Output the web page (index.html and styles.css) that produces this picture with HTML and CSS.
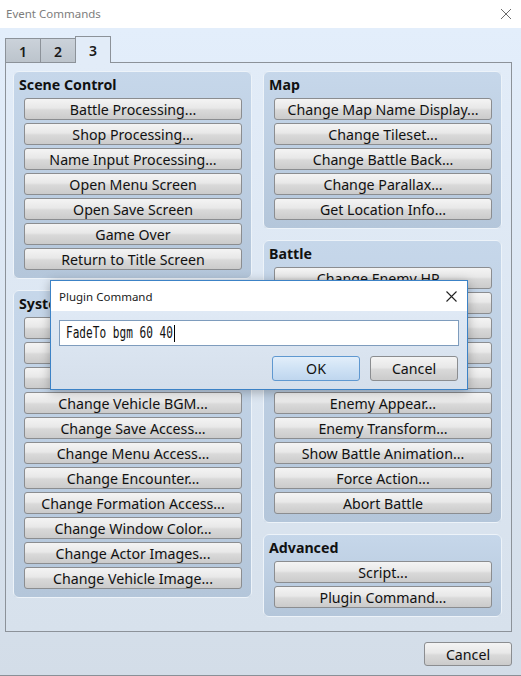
FILE: index.html
```html
<!DOCTYPE html>
<html lang="en">
<head>
<meta charset="utf-8">
<title>Event Commands</title>
<link rel="stylesheet" href="styles.css">
</head>
<body>
<div class="window">
  <header class="titlebar">
    <span class="titlebar-text">Event Commands</span>
    <svg class="close-icon" width="12" height="12" viewBox="0 0 12 12"><path d="M1 1 L11 11 M11 1 L1 11" stroke="#6b6b6b" stroke-width="1" fill="none"/></svg>
  </header>

  <main class="client">
    <div class="tabs">
      <div class="tab">1</div>
      <div class="tab">2</div>
      <div class="tab tab-active">3</div>
    </div>

    <section class="panel">
      <div class="column">
        <fieldset class="group">
          <h2 class="group-title">Scene Control</h2>
          <button class="btn">Battle Processing...</button>
          <button class="btn">Shop Processing...</button>
          <button class="btn">Name Input Processing...</button>
          <button class="btn">Open Menu Screen</button>
          <button class="btn">Open Save Screen</button>
          <button class="btn">Game Over</button>
          <button class="btn">Return to Title Screen</button>
        </fieldset>
        <fieldset class="group">
          <h2 class="group-title">System Settings</h2>
          <button class="btn">Change Battle BGM...</button>
          <button class="btn">Change Victory ME...</button>
          <button class="btn">Change Defeat ME...</button>
          <button class="btn">Change Vehicle BGM...</button>
          <button class="btn">Change Save Access...</button>
          <button class="btn">Change Menu Access...</button>
          <button class="btn">Change Encounter...</button>
          <button class="btn">Change Formation Access...</button>
          <button class="btn">Change Window Color...</button>
          <button class="btn">Change Actor Images...</button>
          <button class="btn">Change Vehicle Image...</button>
        </fieldset>
      </div>
      <div class="column">
        <fieldset class="group">
          <h2 class="group-title">Map</h2>
          <button class="btn">Change Map Name Display...</button>
          <button class="btn">Change Tileset...</button>
          <button class="btn">Change Battle Back...</button>
          <button class="btn">Change Parallax...</button>
          <button class="btn">Get Location Info...</button>
        </fieldset>
        <fieldset class="group">
          <h2 class="group-title">Battle</h2>
          <button class="btn">Change Enemy HP...</button>
          <button class="btn">Change Enemy MP...</button>
          <button class="btn">Change Enemy TP...</button>
          <button class="btn">Change Enemy State...</button>
          <button class="btn">Enemy Recover All...</button>
          <button class="btn">Enemy Appear...</button>
          <button class="btn">Enemy Transform...</button>
          <button class="btn">Show Battle Animation...</button>
          <button class="btn">Force Action...</button>
          <button class="btn">Abort Battle</button>
        </fieldset>
        <fieldset class="group">
          <h2 class="group-title">Advanced</h2>
          <button class="btn">Script...</button>
          <button class="btn">Plugin Command...</button>
        </fieldset>
      </div>
    </section>

    <footer class="footer">
      <button class="btn btn-footer">Cancel</button>
    </footer>
  </main>

  <div class="dialog" role="dialog" aria-label="Plugin Command">
    <div class="dialog-titlebar">
      <span class="dialog-title">Plugin Command</span>
      <svg class="dialog-close" width="11" height="11" viewBox="0 0 11 11"><path d="M0.5 0.5 L10.5 10.5 M10.5 0.5 L0.5 10.5" stroke="#222" stroke-width="1.1" fill="none"/></svg>
    </div>
    <div class="dialog-body">
      <div class="command-input"><span class="command-text">FadeTo bgm 60 40</span><span class="caret"></span></div>
      <div class="dialog-actions">
        <button class="btn btn-dialog btn-default">OK</button>
        <button class="btn btn-dialog">Cancel</button>
      </div>
    </div>
  </div>
</div>
</body>
</html>
```

FILE: styles.css
```css
* {
  box-sizing: border-box;
}

html, body {
  margin: 0;
  padding: 0;
}

body {
  width: 521px;
  height: 676px;
  overflow: hidden;
  font-family: "Noto Sans", "Open Sans", sans-serif;
  font-size: 14px;
  color: #111;
}

.window {
  position: relative;
  width: 521px;
  height: 676px;
  display: flex;
  flex-direction: column;
  border-bottom: 1px solid #8a9097;
}

/* title bar */
.titlebar {
  height: 28px;
  flex: none;
  background: #fff;
  display: flex;
  align-items: center;
  justify-content: space-between;
  padding: 0 9px 2px 6px;
}

.titlebar-text {
  font-size: 11.5px;
  color: #7d7d7d;
}

.close-icon {
  display: block;
  margin-top: 1px;
}

/* window client area */
.client {
  flex: 1;
  display: flex;
  flex-direction: column;
  background: linear-gradient(#e3eefb, #d3dde8);
  padding-top: 8px;
}

.tabs {
  display: flex;
  align-items: flex-end;
  height: 26px;
  padding-left: 5px;
}

.tab {
  width: 36px;
  height: 24px;
  margin-right: -1px;
  border: 1px solid #8c9299;
  border-bottom: none;
  background: linear-gradient(#cbd2da, #bcc4cc);
  display: flex;
  align-items: center;
  justify-content: center;
  font-size: 14px;
  font-weight: 600;
  color: #1a1a1a;
  padding-top: 1px;
}

.tab-active {
  position: relative;
  z-index: 1;
  height: 27px;
  margin-bottom: -1px;
  background: #e2ecf8;
  padding-bottom: 1px;
}

.panel {
  width: 507px;
  height: 570px;
  margin-left: 5px;
  border: 1px solid #8c9299;
  background: linear-gradient(#e2ecf8, #d7e1ec);
  display: flex;
  gap: 11px;
  padding: 8px 0 0 7px;
}

.column {
  width: 239px;
  display: flex;
  flex-direction: column;
  gap: 11px;
}

.group {
  margin: 0;
  min-width: 0;
  border: 1px solid #edf3f9;
  border-radius: 6px;
  background: linear-gradient(#c6d7ea, #b4c6da);
  padding: 0 9px 8px 10px;
  display: flex;
  flex-direction: column;
  gap: 3px;
}

.group-title {
  margin: 0 0 -3px -5px;
  height: 26px;
  line-height: 25px;
  font-size: 14.2px;
  font-weight: 700;
  white-space: nowrap;
}

.btn {
  display: block;
  margin: 0;
  width: 218px;
  height: 22px;
  padding: 0;
  border: 1px solid #8b8d90;
  border-radius: 3px;
  background: linear-gradient(#f4f4f4, #e8e8e8 45%, #d9d9d9 55%, #cbcbcb);
  font-family: inherit;
  font-size: 14.2px;
  color: #111;
  line-height: 19px;
  text-align: center;
  white-space: nowrap;
}

.footer {
  display: flex;
  justify-content: flex-end;
  padding: 10px 9px 0 0;
}

.btn-footer {
  width: 88px;
  height: 24px;
  line-height: 21px;
}

/* modal dialog */
.dialog {
  position: absolute;
  left: 50px;
  top: 280px;
  width: 418px;
  height: 110px;
  border: 1px solid #3c82c6;
  background: linear-gradient(#e3edf9, #d5dfeb);
  box-shadow: 0 2px 10px rgba(0, 0, 0, 0.28);
  display: flex;
  flex-direction: column;
}

.dialog-titlebar {
  height: 30px;
  flex: none;
  background: #fff;
  display: flex;
  align-items: center;
  justify-content: space-between;
  padding: 0 10px 0 8px;
}

.dialog-title {
  font-size: 11.5px;
  color: #1a1a1a;
}

.dialog-close {
  display: block;
}

.dialog-body {
  padding: 9px 8px 0 8px;
  display: flex;
  flex-direction: column;
  gap: 10px;
}

.command-input {
  height: 26px;
  border: 1px solid #7e9cbd;
  background: #fff;
  display: flex;
  align-items: center;
  padding-left: 6px;
}

/* narrow monospace face: the stock mono is squeezed horizontally */
.command-text {
  display: inline-block;
  font-family: "DejaVu Sans Mono", "Liberation Mono", monospace;
  font-size: 15px;
  color: #111;
  transform: scaleX(0.74);
  transform-origin: left center;
  margin-right: -37.5px;
}

.caret {
  display: inline-block;
  width: 1px;
  height: 17px;
  margin-left: 1px;
  background: #000;
}

.dialog-actions {
  display: flex;
  justify-content: flex-end;
  gap: 10px;
  padding-right: 1px;
}

.btn-dialog {
  width: 88px;
  height: 25px;
  line-height: 22px;
}

.btn-default {
  border-color: #5f98d0;
  background: linear-gradient(#e2eefa, #cfe2f5 50%, #bfd6ee);
}
```
